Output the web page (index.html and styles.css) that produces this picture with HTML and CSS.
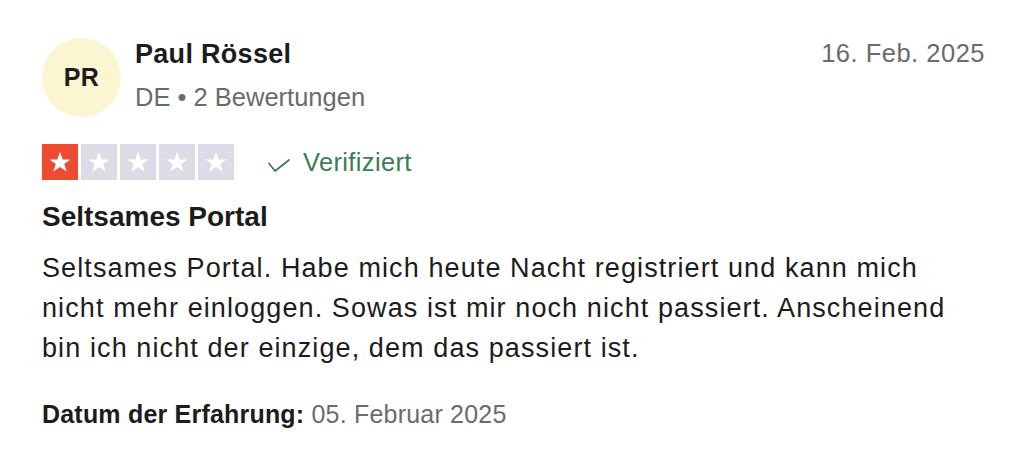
FILE: index.html
```html
<!DOCTYPE html>
<html lang="de">
<head>
<meta charset="utf-8">
<link rel="stylesheet" href="styles.css">
</head>
<body>
<article class="review">
  <header class="head">
    <div class="avatar">PR</div>
    <div class="who">
      <div class="name">Paul Rössel</div>
      <div class="meta">DE • 2 Bewertungen</div>
    </div>
    <time class="date">16. Feb. 2025</time>
  </header>
  <div class="rating">
    <div class="stars">
      <span class="star on"><svg viewBox="0 0 24 24"><path d="M12 3.5l2.3 6.3h6.7l-5.4 3.9 2.1 6.4L12 16.2l-5.7 3.9 2.1-6.4L3 9.8h6.7z" fill="#fff"/></svg></span>
      <span class="star"><svg viewBox="0 0 24 24"><path d="M12 3.5l2.3 6.3h6.7l-5.4 3.9 2.1 6.4L12 16.2l-5.7 3.9 2.1-6.4L3 9.8h6.7z" fill="#fff"/></svg></span>
      <span class="star"><svg viewBox="0 0 24 24"><path d="M12 3.5l2.3 6.3h6.7l-5.4 3.9 2.1 6.4L12 16.2l-5.7 3.9 2.1-6.4L3 9.8h6.7z" fill="#fff"/></svg></span>
      <span class="star"><svg viewBox="0 0 24 24"><path d="M12 3.5l2.3 6.3h6.7l-5.4 3.9 2.1 6.4L12 16.2l-5.7 3.9 2.1-6.4L3 9.8h6.7z" fill="#fff"/></svg></span>
      <span class="star"><svg viewBox="0 0 24 24"><path d="M12 3.5l2.3 6.3h6.7l-5.4 3.9 2.1 6.4L12 16.2l-5.7 3.9 2.1-6.4L3 9.8h6.7z" fill="#fff"/></svg></span>
    </div>
    <div class="verified">
      <svg class="check" viewBox="0 0 22 13"><path d="M1 4.5l6 7.5L21 1" fill="none" stroke="#3a7d54" stroke-width="1.7" stroke-linecap="round" stroke-linejoin="round"/></svg>
      <span>Verifiziert</span>
    </div>
  </div>
  <h2 class="title">Seltsames Portal</h2>
  <p class="body">Seltsames Portal. Habe mich heute Nacht registriert und kann mich nicht mehr einloggen. Sowas ist mir noch nicht passiert. Anscheinend bin ich nicht der einzige, dem das passiert ist.</p>
  <p class="exp"><strong>Datum der Erfahrung:</strong> 05. Februar 2025</p>
</article>
</body>
</html>
```
FILE: styles.css
```css
html, body {
  margin: 0;
  padding: 0;
  background: #fff;
}
body {
  font-family: "Liberation Sans", Arial, Helvetica, sans-serif;
  color: #1c1c1c;
}
.review {
  padding: 38px 39px 0 42px;
}
.head {
  display: flex;
  align-items: flex-start;
}
.avatar {
  width: 79px;
  height: 79px;
  border-radius: 50%;
  background: #fcf5d2;
  display: flex;
  align-items: center;
  justify-content: center;
  font-weight: bold;
  font-size: 25px;
  letter-spacing: 0.5px;
  color: #1c1c1c;
  flex: none;
}
.who {
  margin-left: 14px;
  flex: 1;
}
.name {
  font-size: 27px;
  font-weight: bold;
  line-height: 30px;
  margin-top: 1px;
  letter-spacing: 0.3px;
}
.meta {
  font-size: 25.5px;
  line-height: 30px;
  color: #6b6b6b;
  margin-top: 13px;
}
.date {
  font-size: 25.5px;
  line-height: 30px;
  color: #6b6b6b;
  letter-spacing: 0.5px;
}
.rating {
  display: flex;
  align-items: center;
  margin-top: 27px;
}
.stars {
  display: flex;
  gap: 3px;
}
.star {
  width: 36px;
  height: 36px;
  background: #dcdce6;
  display: flex;
  align-items: center;
  justify-content: center;
}
.star.on {
  background: #ee4b33;
}
.star svg {
  width: 28px;
  height: 28px;
}
.verified {
  display: flex;
  align-items: center;
  margin-left: 34px;
  color: #3a7d54;
  font-size: 25.5px;
  letter-spacing: 0.35px;
}
.check {
  width: 22px;
  height: 13px;
  margin-right: 13px;
  margin-top: 6px;
}
.title {
  font-size: 28px;
  font-weight: bold;
  line-height: 34px;
  margin: 20px 0 0;
}
.body {
  font-size: 27px;
  line-height: 40px;
  margin: 14px 0 0;
  max-width: 930px;
  letter-spacing: 1.1px;
}
.exp {
  font-size: 25px;
  line-height: 30px;
  margin: 31px 0 0;
  color: #6b6b6b;
  letter-spacing: 0.2px;
}
.exp strong {
  color: #1c1c1c;
}
```
